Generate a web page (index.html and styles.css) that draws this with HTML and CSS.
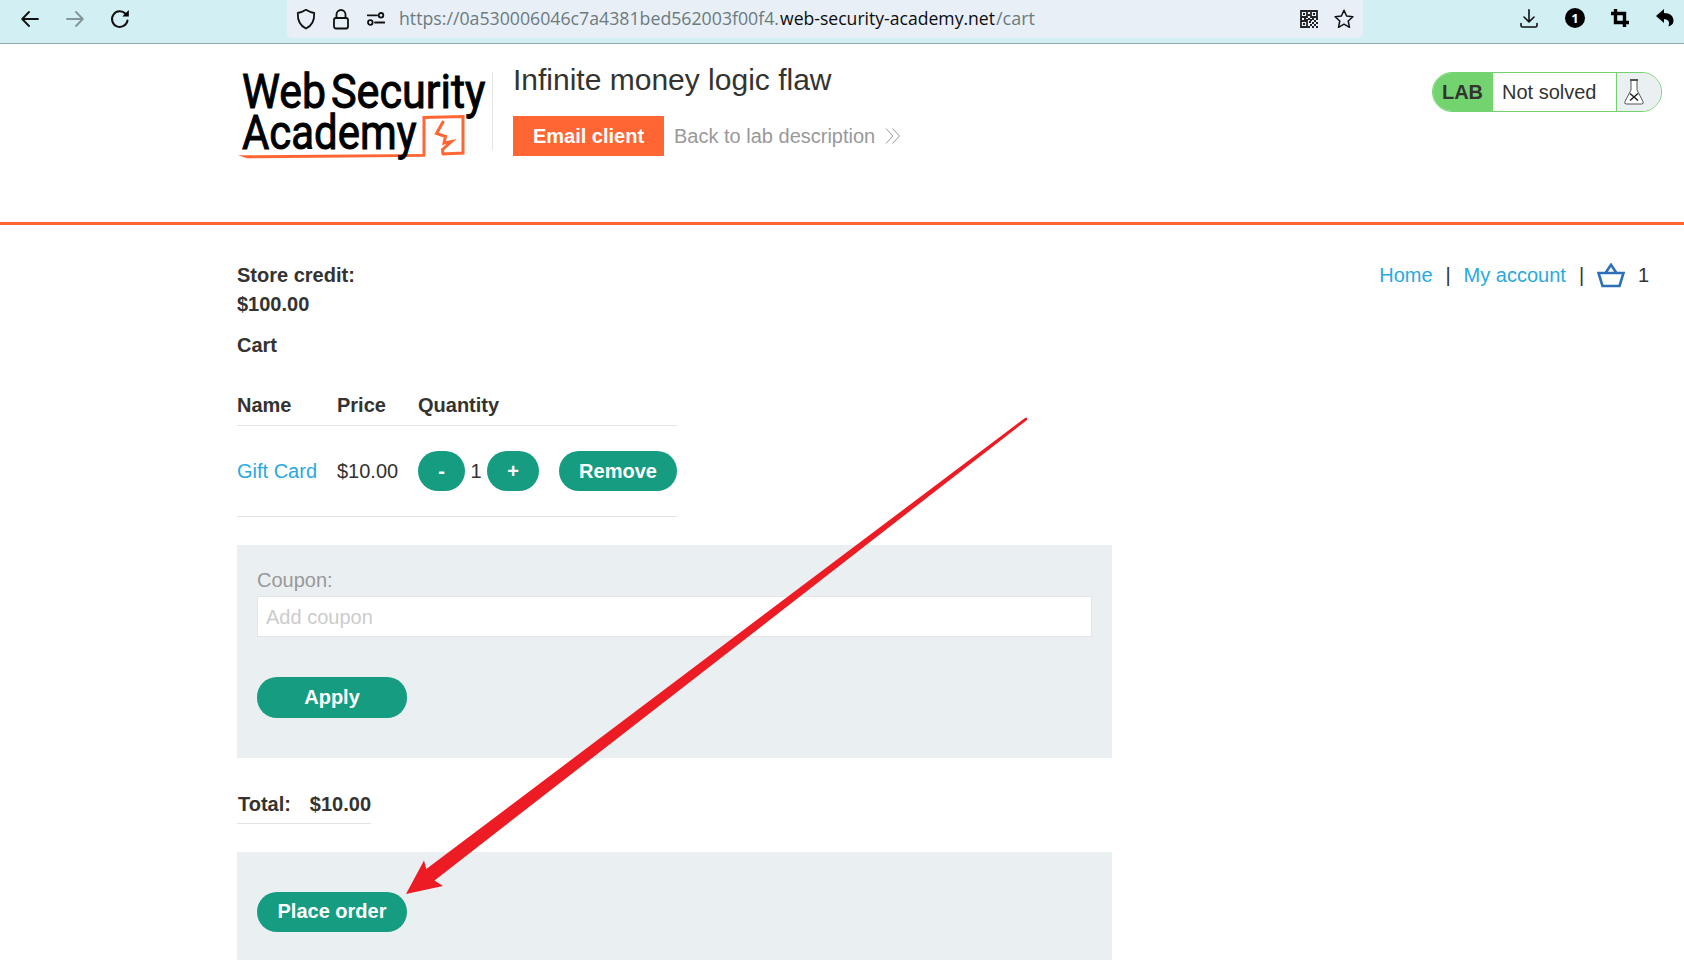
FILE: index.html
```html
<!DOCTYPE html>
<html lang="en">
<head>
<meta charset="utf-8">
<title>Infinite money logic flaw</title>
<link rel="stylesheet" href="styles.css">
</head>
<body>
<div class="toolbar">
  <div class="nav-icons">
    <svg width="18" height="16" viewBox="0 0 18 16" class="ln"><path d="M17 8H1.5M8 1L1.2 8L8 15"/></svg>
    <svg width="18" height="16" viewBox="0 0 18 16" class="ln faded"><path d="M1 8H16.500M10 1L16.800 8L10 15"/></svg>
    <svg width="20" height="20" viewBox="0 0 20 20" class="ln"><path d="M17.500 11.500A7.800 7.800 0 1 1 15.500 4.800" stroke-width="2"/><path d="M18.800 1V7.500H12.300Z" fill="#000" stroke="none"/></svg>
  </div>
  <div class="urlbar">
    <svg class="ln i-shield" width="20" height="22" viewBox="0 0 20 22"><path d="M10 1.800Q14 4.300 18.200 5C18.500 12 16.500 17.500 10 20.500C3.500 17.500 1.500 12 1.800 5Q6 4.300 10 1.800Z"/></svg>
    <svg class="ln i-lock" width="18" height="22" viewBox="0 0 18 22"><rect x="2" y="10" width="14" height="10.500" rx="2"/><path d="M4.500 10V6.500a4.500 4.500 0 0 1 9 0V10"/></svg>
    <svg class="ln i-perm" width="18" height="14" viewBox="0 0 18 14"><path d="M.5 3.300H10M8 10.500H17.500"/><circle cx="14" cy="3.300" r="2.300"/><circle cx="3.300" cy="10.500" r="2.300"/></svg>
    <svg class="url" width="640" height="28"><text x="0" y="20" textLength="380" lengthAdjust="spacingAndGlyphs">https://0a530006046c7a4381bed562003f00f4.</text><text x="381" y="20" textLength="215" lengthAdjust="spacingAndGlyphs" class="host">web-security-academy.net</text><text x="597" y="20" textLength="39" lengthAdjust="spacingAndGlyphs">/cart</text></svg>
    <svg class="i-qr" width="18" height="18" viewBox="0 0 18 18"><path fill="none" stroke="#222" stroke-width="1.800" d="M1 1h6v6H1zM11 1h6v6h-6zM1 11h6v6H1z"/><path fill="#222" d="M3 3h2v2H3zM13 3h2v2h-2zM3 13h2v2H3zM8 0h2v2H8zM8 4h2v2H8zM0 8h2v2H0zM4 8h2v2H4zM6 9h2v2H6zM8 8h2v2H8zM10 9h2v2h-2zM12 8h2v2h-2zM16 8h2v2h-2zM9 11h2v2H9zM14 10h2v2h-2zM12 12h2v2h-2zM16 12h2v2h-2zM14 14h2v2h-2zM10 14h2v2h-2zM8 16h2v2H8zM12 16h2v2h-2zM16 16h2v2h-2z"/></svg>
    <svg class="ln i-star" width="20" height="20" viewBox="0 0 20 20"><path stroke-width="1.500" d="M10 1.200L12.600 7L18.900 7.700L14.200 12L15.500 18.300L10 15.200L4.500 18.300L5.800 12L1.100 7.700L7.400 7Z"/></svg>
  </div>
  <div class="ext-icons">
    <svg class="ln" width="18" height="19" viewBox="0 0 18 19"><path stroke-width="1.600" d="M9 .8V12.500M4 8L9 12.800L14 8M1 14.500V16.500Q1 18 2.500 18H15.500Q17 18 17 16.500V14.500"/></svg>
    <span class="count">1</span>
    <svg width="18" height="18" viewBox="0 0 18 18"><path fill="none" stroke="#000" stroke-width="3.400" d="M4.500 0V13.500H18M0 4.500H13.500V18"/></svg>
    <svg width="18" height="18" viewBox="0 0 18 18"><path d="M0 7L8 0V4C14 4 17.500 7 17.500 11.500Q17.500 16 12.500 17.500Q15 10.500 8 10V14Z"/></svg>
  </div>
</div>

<header class="lab-header">
  <svg class="logo" width="255" height="100" viewBox="0 0 255 100">
    <path fill="#f63" d="M1 99.300L188 98V100.800L110 101.500L10 102.200Z"/>
    <g class="wordmark"><text x="5" y="52" textLength="84" lengthAdjust="spacingAndGlyphs">Web</text><text x="94" y="52" textLength="154.500" lengthAdjust="spacingAndGlyphs">Security</text></g>
    <g fill="none" stroke="#f63" stroke-width="3"><path d="M187 99V61.500L226 60.500V97L205 98"/><path d="M206.500 65L199.500 77.500L208.500 80.500L207 87L214.500 85.500L205.500 93.500L206 98"/></g>
    <text class="wordmark" x="5" y="93" textLength="174.500" lengthAdjust="spacingAndGlyphs">Academy</text>
  </svg>
  <div class="title-block">
    <h2>Infinite money logic flaw</h2>
    <div class="actions"><a class="email">Email client</a><a class="back">Back to lab description</a>
      <svg width="16" height="16" viewBox="0 0 16 16" fill="none" stroke="#999" stroke-width="1"><path d="M1 .5L8 8L1 15.500M7.500 .5L14.500 8L7.500 15.500"/></svg></div>
  </div>
  <div class="status"><b>LAB</b><span>Not solved</span><i>
    <svg width="20" height="26" viewBox="0 0 20 26" fill="#fff" stroke="#555" stroke-width="1"><path d="M7 1.500V11L1 22.500Q0 25 2.500 25H17.500Q20 25 19 22.500L13 11V1.500"/><path d="M6 1H14" stroke-width="2"/><path d="M6 14.500L14 21.500M14 14.500L6 21.500" stroke="#222" stroke-width="1.500"/></svg></i></div>
</header>

<main>
  <div class="top">
    <div class="credit">Store credit:<br>$100.00</div>
    <nav><a>Home</a><span>|</span><a>My account</a><span>|</span>
      <svg width="28" height="25" viewBox="0 0 28 25" fill="none" stroke="#2b70b8" stroke-width="2.600"><path d="M1.500 10H26.500L22.500 23H5.500ZM8.500 10L14 1.800L19.500 10"/></svg><em>1</em></nav>
  </div>
  <h3>Cart</h3>
  <div class="cart">
    <div class="row head"><b>Name</b><b>Price</b><b>Quantity</b></div>
    <div class="row item"><a>Gift Card</a><span>$10.00</span>
      <div class="qty"><button class="minus">-</button><span>1</span><button class="plus">+</button></div>
      <button class="remove">Remove</button></div>
  </div>
  <form class="panel coupon">
    <label>Coupon:</label>
    <input type="text" placeholder="Add coupon">
    <button type="button" class="wide">Apply</button>
  </form>
  <div class="total"><b>Total:</b><b>$10.00</b></div>
  <div class="panel order"><button class="wide">Place order</button></div>
</main>
<svg class="arrow" width="1684" height="960"><path fill="#ed1c24" d="M406 894L424 860.500L426.300 869L1025 418Q1028 417 1027 420L434.500 880.500L443 886Z"/></svg>
</body>
</html>
```
FILE: styles.css
```css
* { box-sizing: border-box; }
body { margin: 0; height: 960px; overflow: hidden; background: #fff; color: #333332; font: 20px/29px "Liberation Sans", Arial, sans-serif; }
svg { display: block; flex: none; }
button { border: 0; padding: 0; height: 40px; border-radius: 20px; background: #169c80; color: #fff; font: bold 20px/40px "Liberation Sans", Arial, sans-serif; }
a { color: #29a9e1; }

.toolbar { display: flex; height: 44px; background: #d2eff3; border-bottom: 1px solid #8fa9ac; }
.ln { fill: none; stroke: #111; stroke-width: 1.8; stroke-linecap: round; stroke-linejoin: round; }
.faded { opacity: .4; }
.nav-icons { display: flex; align-items: center; width: 287px; height: 37px; padding-left: 21px; gap: 27px; }
.nav-icons svg:last-child { margin-left: -1px; }
.urlbar { display: flex; align-items: center; width: 1076px; height: 38px; padding-left: 9px; background: #e8eff6; border-radius: 0 0 5px 5px; }
.i-lock { margin-left: 16px; }
.i-perm { margin-left: 17px; }
.url { margin-left: 14px; font: 18.5px "Open Sans", "Noto Sans", sans-serif; fill: #6c7b7e; }
.host { fill: #0c0c0d; }
.i-qr { margin-left: 261px; }
.i-star { margin-left: 16px; }
.ext-icons { display: flex; align-items: center; height: 36px; padding-left: 157px; gap: 26px; }
.ext-icons svg:last-child { margin-left: 1px; }
.count { width: 20px; height: 20px; margin-left: 1px; border-radius: 50%; background: #000; color: #fff; font: bold 13px/20px "Open Sans", sans-serif; text-align: center; }

.lab-header { display: flex; height: 181px; padding: 12px 22px 0 237px; border-bottom: 3px solid #f63; }
.logo { overflow: visible; }
.wordmark { font: 400 48px Roboto, sans-serif; fill: #000; stroke: #000; stroke-width: 1; }
.title-block { margin-top: 16px; height: 78px; padding-left: 20px; border-left: 1px solid #e4e4e4; }
h2 { margin: -10px 0 0; font-size: 30px; line-height: 36px; font-weight: 400; }
.actions { display: flex; align-items: center; margin-top: 18px; height: 40px; }
.email { width: 151px; height: 40px; background: #f63; color: #fff; font-weight: bold; line-height: 40px; text-align: center; }
.back { margin: 0 10px 0 10px; color: #999; }
.status { display: flex; width: 230px; height: 40px; margin: 16px 0 0 auto; border: 1px solid #73d36f; border-radius: 20px; overflow: hidden; line-height: 38px; }
.status b { width: 60px; padding-right: 1px; background: #73d36f; text-align: center; }
.status span { flex: 1; padding-left: 9px; }
.status i { width: 45px; padding: 6px 0 0 7px; background: #eaeff2; border-left: 1px solid #73d36f; }

main { width: 875px; margin-left: 237px; }
.top { display: flex; width: 1412px; padding-top: 36px; justify-content: space-between; }
.credit, h3 { font-weight: bold; }
nav { display: flex; align-items: center; height: 29px; }
nav span { width: 5px; margin: 0 13px 0 13px; }
nav em { margin-left: 13px; font-style: normal; }
h3 { margin: 12px 0 0; font-size: 20px; line-height: 29px; }
.cart { width: 440px; margin-top: 31px; }
.row { display: grid; grid-template-columns: 100px 81px 141px 118px; border-bottom: 1px solid #e4e4e4; }
.head { height: 35px; }
.item { height: 91px; align-items: center; }
.qty { display: flex; align-items: center; }
.qty span { width: 22px; text-align: center; }
.minus { width: 47px; }
.plus { width: 52px; }
.panel { background: #eaeff2; padding: 0 20px; }
.coupon { display: flex; flex-direction: column; height: 213px; margin-top: 28px; padding-top: 20px; }
.coupon label { height: 31px; line-height: 31px; color: #999; }
input { height: 41px; padding: 1px 8px 0; border: 1px solid #e4e4e4; background: #fff; font: 20px "Liberation Sans", Arial, sans-serif; }
input::placeholder { color: #ccc; }
.wide { width: 150px; margin-top: 40px; padding-bottom: 2px; line-height: 38px; }
.coupon .wide { height: 41px; }
.total { display: flex; justify-content: space-between; width: 134px; height: 34px; margin-top: 32px; padding-left: 1px; border-bottom: 1px solid #e4e4e4; }
.order { height: 108px; margin-top: 28px; padding-top: 0; display: flex; }
.arrow { position: absolute; left: 0; top: 0; pointer-events: none; }
```
